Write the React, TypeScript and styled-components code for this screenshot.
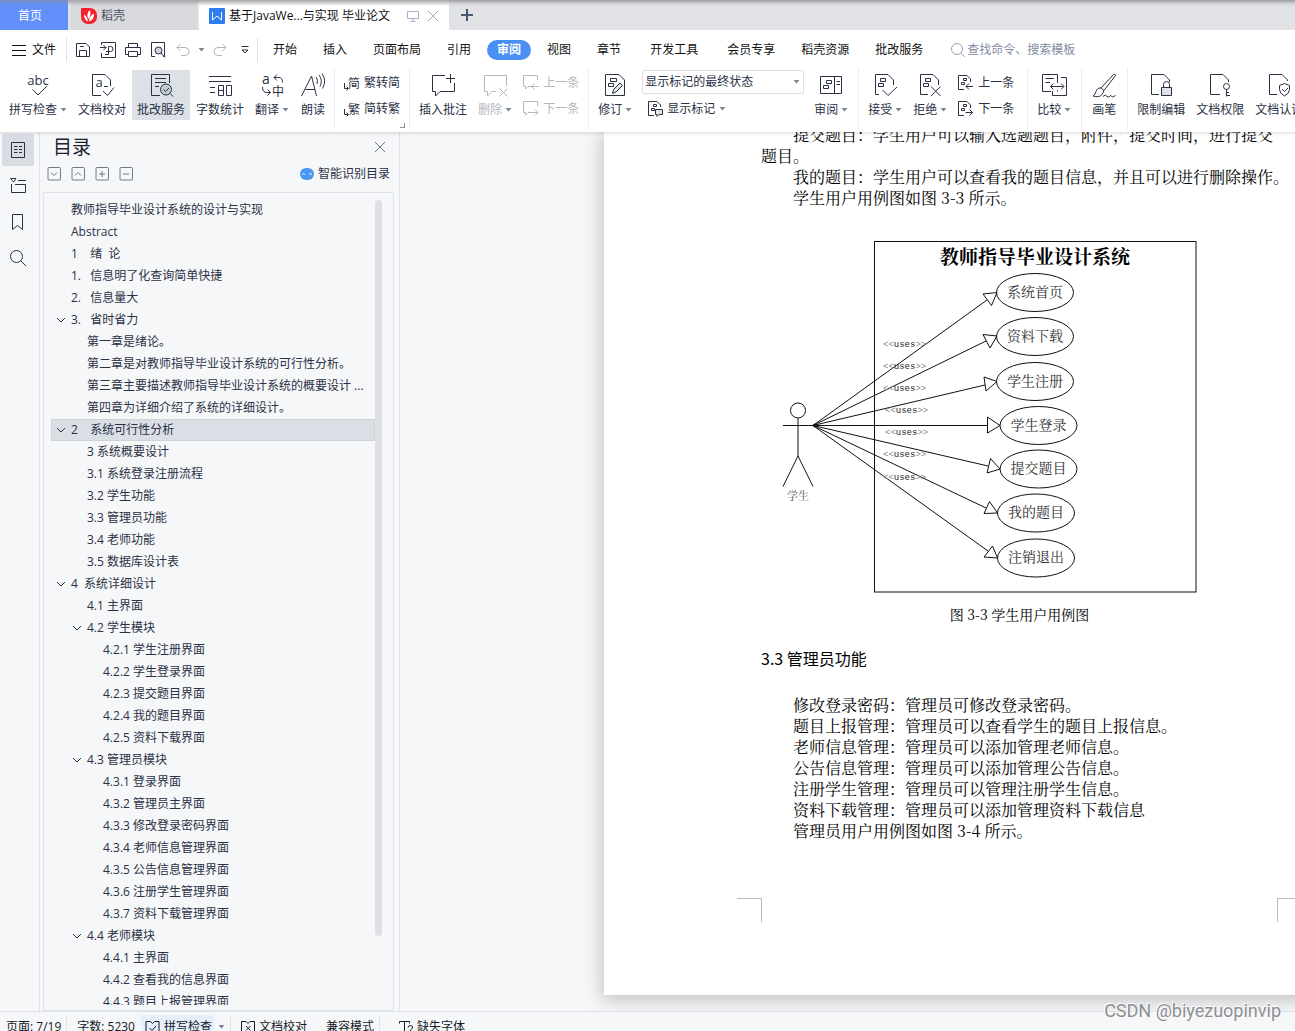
import React from "react";
import styled, { createGlobalStyle, css } from "styled-components";

const ink = "#2a3145";
const muted = "#b4b7bd";
const line = "#dfe2e6";
const panel = "#f6f7f9";
const uiFont = `"Open Sans", "Noto Sans CJK SC", sans-serif`;
const docFont = `"Noto Serif CJK SC", "Noto Sans CJK SC", serif`;

const Global = createGlobalStyle`
  * { box-sizing: border-box; }
  body { margin: 0; font: 12px/16px ${uiFont}; color: ${ink}; background: ${panel}; }
  button, input, select { font: inherit; color: inherit; background: none; border: 0; padding: 0; margin: 0; }
  button { white-space: nowrap; cursor: pointer; }
  svg { display: block; flex: none; overflow: visible; }
  ul { list-style: none; margin: 0; padding: 0; }
`;

const App_ = styled.div`
  height: 100vh;
  display: flex;
  flex-direction: column;
  overflow: hidden;
`;

/* ---------- window tabs ---------- */
const TabBar = styled.header`
  display: flex;
  flex: none;
  height: 30px;
  background:
    linear-gradient(#9c9ea0, rgba(200, 202, 205, 0.5) 4px, transparent 6px),
    #e1e2e6;
`;
const HomeTab = styled.button`
  width: 68px;
  padding: 2px 8px 0 0;
  color: #fff;
  background: linear-gradient(#7c90bb, #628ffa 5px);
`;
const Tab = styled.div<{ $active?: boolean }>`
  display: flex;
  align-items: center;
  gap: 4px;
  margin-left: ${(p) => (p.$active ? 2 : 3)}px;
  padding: 2px 8px 0 10px;
  width: ${(p) => (p.$active ? 250 : 126)}px;
  color: ${(p) => (p.$active ? "#111" : "#4b5160")};
  background: linear-gradient(
    #a4a5a7,
    ${(p) => (p.$active ? "#fff" : "#d8d9dc")} 6px
  );
`;
const TabTitle = styled.span`
  flex: 1;
  white-space: nowrap;
`;
const IconButton = styled.button<{ $size?: number }>`
  display: flex;
  align-items: center;
  justify-content: center;
  width: ${(p) => p.$size ?? 20}px;
  height: ${(p) => p.$size ?? 20}px;
`;
const NewTab = styled(IconButton)`
  width: 36px;
  height: 30px;
`;

/* ---------- menu row ---------- */
const MenuRow = styled.nav`
  display: flex;
  flex: none;
  align-items: center;
  height: 38px;
  padding-top: 1px;
  background: #fff;
`;
const FileButton = styled.button`
  display: flex;
  align-items: center;
  gap: 6px;
  padding: 0 10px 0 12px;
  color: #111;
`;
const QuickBar = styled.div`
  display: flex;
  align-items: center;
  height: 24px;
  gap: 5px;
  padding: 0 2px 0 6px;
  border: solid ${line};
  border-width: 0 1px;
`;
const MenuItems = styled.div`
  display: flex;
  align-items: center;
  padding-left: 2px;
`;
const MenuItem = styled.button<{ $wide?: boolean; $active?: boolean }>`
  color: #111;
  padding: 0 13px;
  ${(p) => p.$wide && css`padding: 0 13px 0 16px;`}
  ${(p) =>
    p.$active &&
    css`
      color: #fff;
      font-weight: 700;
      background: #4a90f4;
      height: 20px;
      border-radius: 10px;
      padding: 0 10px;
      margin: 0 3px;
    `}
`;
const Search = styled.label`
  display: flex;
  align-items: center;
  gap: 1px;
  margin-left: 14px;
  input { width: 130px; outline: 0; }
  input::placeholder { color: #828ba3; opacity: 1; }
`;

/* ---------- ribbon ---------- */
const Ribbon = styled.div`
  position: relative;
  z-index: 2;
  display: flex;
  flex: none;
  height: 64px;
  background: #fff;
  overflow: hidden;
`;
const RibbonShadow = styled.div`
  flex: none;
  height: 4px;
  margin-bottom: -4px;
  position: relative;
  z-index: 2;
  background: linear-gradient(rgba(0, 0, 0, 0.1), transparent);
`;
const Group = styled.div<{ $trail?: number; $last?: boolean }>`
  display: flex;
  flex: none;
  gap: 1px;
  height: 62px;
  padding: 2px ${(p) => p.$trail ?? 5}px 0 4px;
  border-right: ${(p) => (p.$last ? 0 : 1)}px solid #eceef0;
`;
const Big = styled.button<{ $active?: boolean }>`
  display: flex;
  flex-direction: column;
  align-items: center;
  gap: 4px;
  height: 50px;
  padding: 2px 5px 0;
  background: ${(p) => (p.$active ? "#dbe1e6" : "none")};
  &:disabled { color: ${muted}; }
`;
const Label = styled.span`
  display: flex;
  align-items: center;
  gap: 3px;
`;
const Stack = styled.div<{ $side?: number }>`
  display: flex;
  flex-direction: column;
  gap: 2px;
  padding: 0 ${(p) => p.$side ?? 0}px;
`;
const Small = styled.button`
  display: flex;
  align-items: center;
  gap: 4px;
  height: 24px;
  padding: 1px 5px 0;
  &:disabled { color: ${muted}; }
`;
const SelectBox = styled.label`
  display: grid;
  align-items: center;
  width: 162px;
  height: 24px;
  border: 1px solid #dcdfe4;
  border-radius: 2px;
  select, svg { grid-area: 1 / 1; }
  select { appearance: none; width: 100%; padding-left: 2px; outline: 0; }
  svg { justify-self: end; margin-right: 3px; pointer-events: none; }
`;
const Launcher = styled.span`
  align-self: flex-end;
  width: 5px;
  height: 5px;
  margin: 0 1px 2px -6px;
  border: solid #8a90a0;
  border-width: 0 1px 1px 0;
`;

/* ---------- work area ---------- */
const Main = styled.main`
  display: flex;
  flex: 1;
  min-height: 0;
`;
const Rail = styled.nav`
  display: flex;
  flex: none;
  flex-direction: column;
  gap: 4px;
  width: 40px;
  padding: 2px;
  border-right: 1px solid ${line};
`;
const RailButton = styled.button<{ $active?: boolean }>`
  display: flex;
  align-items: center;
  justify-content: center;
  width: 32px;
  height: 32px;
  border-radius: 2px;
  background: ${(p) => (p.$active ? "#d8dde4" : "none")};
`;
const Outline = styled.aside`
  display: flex;
  flex: none;
  flex-direction: column;
  width: 360px;
  padding: 2px 5px 0 3px;
  border-right: 1px solid ${line};
`;
const OutlineHead = styled.div`
  display: flex;
  align-items: center;
  justify-content: space-between;
  height: 26px;
  padding: 0 5px 0 10px;
  h2 { margin: 0; font-size: 19px; line-height: 26px; font-weight: 400; color: #1c2233; }
`;
const OutlineTools = styled.div`
  display: flex;
  align-items: center;
  gap: 10px;
  height: 28px;
  padding: 0 4px;
`;
const Smart = styled.button`
  display: flex;
  align-items: center;
  gap: 4px;
  margin-left: auto;
`;
const TreeBox = styled.div`
  display: flex;
  flex: 1;
  min-height: 0;
  margin-top: 4px;
  padding: 6px 11px 5px 7px;
  border: 1px solid ${line};
  border-radius: 2px;
`;
const Tree = styled.ul`
  flex: 1;
  overflow: hidden;
`;
const Row = styled.button<{ $level: number; $active?: boolean }>`
  display: flex;
  align-items: center;
  gap: 5px;
  width: 100%;
  height: 22px;
  padding-left: ${(p) => 4 + p.$level * 16}px;
  white-space: pre;
  border: 1px solid ${(p) => (p.$active ? "#cdd3da" : "transparent")};
  background: ${(p) => (p.$active ? "#dadfe5" : "none")};
`;
const Chevron = styled.span`
  width: 10px;
`;
const Scroll = styled.div`
  width: 7px;
  height: 736px;
  max-height: 92%;
  margin-top: 1px;
  border-radius: 4px;
  background: #dfe0e3;
`;

const Canvas = styled.section`
  display: flex;
  flex: 1;
  min-width: 0;
  padding: 0 0 16px 204px;
  overflow: hidden;
  background: ${panel};
`;
const Page = styled.article`
  flex: none;
  width: 831px;
  padding: 0 157px;
  background: #fff;
  box-shadow: 0 3px 18px 2px rgba(0, 0, 0, 0.22);
  color: #000;
  font: 16px/21px ${docFont};
`;
const Scrolled = styled.div`
  margin-top: -8px;
  p { margin: 0; text-indent: 32px; }
  h3 { margin: 23px 0 25px; font-size: 16px; line-height: 21px; font-weight: 400; font-family: "Noto Sans CJK SC", sans-serif; }
`;
const OneLine = styled.p`
  white-space: nowrap;
`;
const Figure = styled.figure`
  margin: 23px 0 0;
  svg { width: 100%; }
  figcaption { margin-top: 3px; font-size: 14px; text-align: center; }
`;
const CropMarks = styled.div`
  display: flex;
  justify-content: space-between;
  margin: 57px -24px 0;
`;
const Mark = styled.span<{ $right?: boolean }>`
  width: 25px;
  height: 24px;
  border-top: 1px solid #bbb;
  ${(p) => (p.$right ? "border-left" : "border-right")}: 1px solid #bbb;
`;

/* ---------- status bar ---------- */
const StatusBar = styled.footer`
  display: flex;
  flex: none;
  height: 20px;
  overflow: hidden;
  padding: 3px 0 0 6px;
  color: #151a28;
  border-top: 1px solid ${line};
  background: ${panel};
`;
const StatusItem = styled.button<{ $on?: boolean; $gap?: number }>`
  display: flex;
  align-items: center;
  gap: 4px;
  height: 24px;
  margin-right: ${(p) => p.$gap ?? 6}px;
  ${(p) => p.$on && css`background: #e5effb; padding: 0 2px 0 4px;`}
`;
const StatusRule = styled.span<{ $gap?: number }>`
  width: 1px;
  height: 20px;
  margin: 1px ${(p) => p.$gap ?? 10}px 0 0;
  background: ${line};
`;
const Watermark = styled.div`
  position: absolute;
  right: 14px;
  bottom: 8px;
  z-index: 3;
  font: 18px/24px Roboto, sans-serif;
  color: #8d8f92;
  text-shadow: -1px -1px 0 #fff;
`;

/* ---------- icons ---------- */
type IconProps = { w?: number; h?: number; children: React.ReactNode };
const Ico = ({ w = 26, h = w, children }: IconProps) => (
  <svg width={w} height={h} viewBox={`0 0 ${w} ${h}`} fill="none" stroke="currentColor" aria-hidden="true">
    {children}
  </svg>
);
const Caret = () => (
  <svg width="7" height="4" viewBox="0 0 7 4" aria-hidden="true">
    <path d="M0.5 0h6L3.5 3.5z" fill="#7c8498" />
  </svg>
);
const glyph = { fill: "currentColor", stroke: "none" };

const icons = {
  spell: (
    <Ico>
      <text x="13" y="13" fontSize="13" textAnchor="middle" {...glyph}>abc</text>
      <path d="M7.500 17.500l5.500 5.500 9-9" />
    </Ico>
  ),
  proof: (
    <Ico>
      <path d="M12 23.500H3.500V2.500H16L21.500 8V14M14 19l4.500 4.500L25 15.500" />
      <text x="6.500" y="15" fontSize="13" {...glyph}>a</text>
      <path d="M15 14.500h4" />
    </Ico>
  ),
  review: (
    <Ico>
      <path d="M12 23.500H3.500V2.500H21.500V11M7 6.500H18M7 10.500H18M7 14.500H11" />
      <circle cx="18" cy="17.500" r="5.500" fill="#c3c9d1" />
      <path d="M15.500 17.500l2 2 3.500-3.500M22 21.500l3 3" />
    </Ico>
  ),
  count: (
    <Ico>
      <path d="M2 4.500H24M2 9.500H24M3 15.500H8M3 20.500H8M11.500 13.500H16.500V23.500H11.500zM11.500 18.500H16.500M19.500 13.500H24.500V23.500H19.500z" />
    </Ico>
  ),
  translate: (
    <Ico>
      <text x="3" y="12" fontSize="14" {...glyph}>a</text>
      <text x="13" y="24" fontSize="12" {...glyph}>中</text>
      <path d="M15 5.500H20q3.500 0 3.500 5M18 2.500l-3 3 3 3M3.500 15q0 5.500 4.500 5.500h3M8.500 17.500l3 3-3 3" />
    </Ico>
  ),
  read: (
    <Ico>
      <path d="M1.500 24L11.500 4L16.500 24M5.500 17.500H15" />
      <path d="M16 5q2.500 3 1 7M19 3q4 5 1 11.500M22 1.500q5 7 .5 15" />
    </Ico>
  ),
  comment: (
    <Ico>
      <path d="M15 3.500H2.500V19.500H5.500V24L10 19.500H24.500V11M20.500 2V11M16 6.500H25" />
    </Ico>
  ),
  uncomment: (
    <Ico>
      <path d="M14 19.500H10L5.500 24V19.500H2.500V3.500H24.500V14M17.500 16.500l8 8M25.500 16.500l-8 8" />
    </Ico>
  ),
  revise: (
    <Ico>
      <path d="M12 23.500H3.500V2.500H17L22.500 8V23.500H12M8.500 6.500H14.500V9.500H8.500zM6.500 11.500H11.500V14.500H6.500z" />
      <path d="M10.500 21.500l1-4 6.500-6.500 2.500 2.500-6.500 6.500z" fill="#dfe2e6" />
    </Ico>
  ),
  pane: (
    <Ico>
      <path d="M2.500 4.500H23.500V21.500H2.500zM16.500 4.500V21.500M8.500 8.500H13.500V11.500H8.500zM5.500 13.500H10.500V16.500H5.500zM18.500 9.500H22M18.500 12.500H22" />
    </Ico>
  ),
  accept: (
    <Ico>
      <path d="M7 22.500H3.500V2.500H16L21.500 8V13M8.500 6.500H13.500V9.500H8.500zM6.500 11.500H11.500V14.500H6.500zM10.500 18l5.500 5.500L25 15" />
    </Ico>
  ),
  reject: (
    <Ico>
      <path d="M11 22.500H3.500V2.500H16L21.500 8V13M8.500 6.500H13.500V9.500H8.500zM6.500 11.500H11.500V14.500H6.500zM14 14.500l9.500 9.500M23.500 14.500L14 24" />
    </Ico>
  ),
  compare: (
    <Ico>
      <path d="M16.500 11V2.500H1.500V19.500H10M4.500 6.500H13M4.500 10.500H9M20 5.500H25.500V23.500H11.500V19M16.500 19.500V18M10 14.500H22.500M12.500 11.500l-3 3 3 3M20 11.500l3 3-3 3" />
    </Ico>
  ),
  brush: (
    <Ico>
      <path d="M22.500 2.500q1.500-1 2 1L13 18.500l-3-2.500zM10 16q-4-.5-5 3.500-.5 3-3 4.500 6 2 9-1.500 1.500-2 2-4M12 24.500q2.500-3 4 0 2 1.500 3.500-1 2 3 5 0" />
    </Ico>
  ),
  lockDoc: (
    <Ico>
      <path d="M11 22.500H3.500V2.500H16L21.500 8V10M15.500 15V12.500a3 3 0 0 1 6 0V15" />
      <path d="M13.500 15.500H23.500V23.500H13.500z" fill="#dfe2e6" />
    </Ico>
  ),
  keyDoc: (
    <Ico>
      <path d="M13 22.500H3.500V2.500H16L21.500 8V10" />
      <circle cx="19.500" cy="14.500" r="3" />
      <path d="M19.500 17.500V24.500M19.500 20.500H22M19.500 23.500H23" />
    </Ico>
  ),
  shieldDoc: (
    <Ico>
      <path d="M11 22.500H3.500V2.500H16L21.500 8V9M18.500 11.500l5 2v4q0 4-5 6.500-5-2.500-5-6.500v-4zM16 17l2.500 2.500 3.500-3.500" />
    </Ico>
  ),
};

const Convert = ({ char }: { char: string }) => (
  <Ico w={16}>
    <text x="4" y="13" fontSize="12" {...glyph}>{char}</text>
    <path d="M.5 8V13.500H4M2.500 11.500l2 2-2 2" />
  </Ico>
);
const CommentNav = ({ next }: { next?: boolean }) => (
  <Ico w={16}>
    <path d="M8 11.500H5L2.500 14V11.500H.5V.5H14.500V5" />
    <path d={next ? "M8 11.500H15M12 8.500l3 3-3 3" : "M8.500 11.500H16M11.500 8.500l-3 3 3 3"} />
  </Ico>
);
const ChangeNav = ({ next }: { next?: boolean }) => (
  <Ico w={16}>
    <path d="M6 14.500H.5V.5H9L12.500 4V7M5.500 3.500H8.500V5.500H5.500zM3.500 7.500H6.500V9.500H3.500z" />
    <path d={next ? "M7.500 11.500H14.500M11.500 8.500l3 3-3 3" : "M8 11.500H15M11 8.500l-3 3 3 3"} />
  </Ico>
);

type BigProps = { icon: React.ReactNode; text: string; menu?: boolean; active?: boolean; disabled?: boolean };
const BigButton = ({ icon, text, menu, active, disabled }: BigProps) => (
  <Big $active={active} disabled={disabled}>
    {icon}
    <Label>
      {text}
      {menu && <Caret />}
    </Label>
  </Big>
);

/* ---------- data ---------- */
type Node = { level: number; text: string; open?: boolean; active?: boolean };
const outline: Node[] = [
  { level: 0, text: "教师指导毕业设计系统的设计与实现" },
  { level: 0, text: "Abstract" },
  { level: 0, text: "1    绪  论" },
  { level: 0, text: "1.   信息明了化查询简单快捷" },
  { level: 0, text: "2.   信息量大" },
  { level: 0, text: "3.   省时省力", open: true },
  { level: 1, text: "第一章是绪论。" },
  { level: 1, text: "第二章是对教师指导毕业设计系统的可行性分析。" },
  { level: 1, text: "第三章主要描述教师指导毕业设计系统的概要设计 ..." },
  { level: 1, text: "第四章为详细介绍了系统的详细设计。" },
  { level: 0, text: "2    系统可行性分析", open: true, active: true },
  { level: 1, text: "3 系统概要设计" },
  { level: 1, text: "3.1 系统登录注册流程" },
  { level: 1, text: "3.2 学生功能" },
  { level: 1, text: "3.3 管理员功能" },
  { level: 1, text: "3.4 老师功能" },
  { level: 1, text: "3.5 数据库设计表" },
  { level: 0, text: "4  系统详细设计", open: true },
  { level: 1, text: "4.1 主界面" },
  { level: 1, text: "4.2 学生模块", open: true },
  { level: 2, text: "4.2.1 学生注册界面" },
  { level: 2, text: "4.2.2 学生登录界面" },
  { level: 2, text: "4.2.3 提交题目界面" },
  { level: 2, text: "4.2.4 我的题目界面" },
  { level: 2, text: "4.2.5 资料下载界面" },
  { level: 1, text: "4.3 管理员模块", open: true },
  { level: 2, text: "4.3.1 登录界面" },
  { level: 2, text: "4.3.2 管理员主界面" },
  { level: 2, text: "4.3.3 修改登录密码界面" },
  { level: 2, text: "4.3.4 老师信息管理界面" },
  { level: 2, text: "4.3.5 公告信息管理界面" },
  { level: 2, text: "4.3.6 注册学生管理界面" },
  { level: 2, text: "4.3.7 资料下载管理界面" },
  { level: 1, text: "4.4 老师模块", open: true },
  { level: 2, text: "4.4.1 主界面" },
  { level: 2, text: "4.4.2 查看我的信息界面" },
  { level: 2, text: "4.4.3 题目上报管理界面" },
];

const cases = [
  { name: "系统首页", cx: 1035, cy: 292.5, head: "983,294 997,292.5 991.5,305.5", end: [987, 300], uses: [883, 347] },
  { name: "资料下载", cx: 1035, cy: 336.5, head: "983,334.500 997,336 990,348", end: [986, 341], uses: [883, 369] },
  { name: "学生注册", cx: 1035, cy: 381.5, head: "984,377 997,381.500 986,391", end: [985, 385], uses: [883, 391] },
  { name: "学生登录", cx: 1038.5, cy: 425.5, head: "987.500,417 1000,425.500 987.500,433", end: [987, 425.5], uses: [885, 413] },
  { name: "提交题目", cx: 1038.5, cy: 469, head: "990.500,458.500 1000,469 987,473", end: [988, 466], uses: [885, 435] },
  { name: "我的题目", cx: 1036, cy: 513, head: "989.500,501.500 997.500,513 984,513.500", end: [986, 508], uses: [883, 457] },
  { name: "注销退出", cx: 1036, cy: 558, head: "992.500,546 997.500,558 984,557", end: [988, 551], uses: [883, 480] },
];

const UseCaseDiagram = () => (
  <svg height="370" viewBox="761 231 517 370" fill="none" stroke="#111" fontFamily={docFont}>
    <rect x="874.5" y="241.500" width="321.5" height="350.500" />
    <text x="1035" y="264" fontSize="19" fontWeight="700" textAnchor="middle" fill="#000" stroke="none">
      教师指导毕业设计系统
    </text>
    <circle cx="798" cy="410.500" r="7.500" />
    <path d="M798 418V456M783 425.500H813M798 456L783 486.500M798 456L813 486.500" />
    <text x="798" y="500" fontSize="11" textAnchor="middle" fill="#555" stroke="none">学生</text>
    {cases.map((c) => (
      <g key={c.name}>
        <path d={`M813 425.500L${c.end[0]} ${c.end[1]}`} />
        <polygon points={c.head} />
        <ellipse cx={c.cx} cy={c.cy} rx="38.500" ry="19" />
        <text x={c.cx} y={c.cy + 4} fontSize="14" textAnchor="middle" fill="#333" stroke="none">
          {c.name}
        </text>
        <text x={c.uses[0]} y={c.uses[1]} fontSize="9" fontFamily="Liberation Mono, monospace" fill="#888" stroke="none">
          &lt;&lt;<tspan fill="#222">uses</tspan>&gt;&gt;
        </text>
      </g>
    ))}
    <circle cx="815" cy="425.500" r="1.500" fill="#111" />
  </svg>
);

const toolPaths = [
  ["全部收起", "M4 5.500l3 3 3-3"],
  ["全部展开", "M4 8.500l3-3 3 3"],
  ["增加", "M4 7H10M7 4V10"],
  ["减少", "M4 7H10"],
];

export default function App() {
  return (
    <App_>
      <Global />
      <TabBar>
        <HomeTab>首页</HomeTab>
        <Tab>
          <svg width="16" height="16" viewBox="0 0 16 16" aria-hidden="true">
            <path d="M1 0h8a7 7 0 0 1 7 7v2a7 7 0 0 1-7 7H7a7 7 0 0 1-7-7V1a1 1 0 0 1 1-1z" fill="#f5222d" />
            <path d="M8.500 2q2.500 4-1 9-2.500-4.500 1-9zM13 5.500q.5 6-5 8 0-5.500 5-8zM3 6.500q3.500 2 4 7Q3 12 3 6.500z" fill="#fff" />
          </svg>
          <TabTitle>稻壳</TabTitle>
        </Tab>
        <Tab $active>
          <svg width="16" height="16" viewBox="0 0 16 16" aria-hidden="true">
            <rect width="16" height="16" rx="1" fill="#2e7df0" />
            <path d="M3.500 4v8l4.500-4 4.500 4V4" fill="none" stroke="#fff" />
          </svg>
          <TabTitle>基于JavaWe...与实现 毕业论文</TabTitle>
          <IconButton $size={16} aria-label="窗口">
            <svg width="12" height="12" viewBox="0 0 12 12" fill="none" stroke="#a9b0c6">
              <path d="M.5 1.500H11.500V8.500H.5zM6 8.500V11M3.500 11.500H8.500" />
            </svg>
          </IconButton>
          <IconButton $size={16} aria-label="关闭标签">
            <svg width="12" height="12" viewBox="0 0 12 12" stroke="#a0a7b8"><path d="M1 1L11 11M11 1L1 11" /></svg>
          </IconButton>
        </Tab>
        <NewTab aria-label="新建">
          <svg width="12" height="12" viewBox="0 0 12 12" stroke="#4a5878" strokeWidth="2"><path d="M6 0V12M0 6H12" /></svg>
        </NewTab>
      </TabBar>

      <MenuRow>
        <FileButton>
          <Ico w={14}><path d="M0 2.500H14M0 7.500H14M0 12.500H14" /></Ico>
          文件
        </FileButton>
        <QuickBar>
          <IconButton aria-label="保存">
            <Ico w={16}><path d="M1.500 1.500H11L14.500 5V14.500H1.500zM4.500 14.500V8.500H11.500V14.500M5 4.500H9" /></Ico>
          </IconButton>
          <IconButton aria-label="输出为PDF">
            <Ico w={16}><path d="M1.500 3V.5H15.500V15.500H1.500V11M0 5.500H6M3.500 3l2.500 2.500L3.500 8M5 12.500H8.500V4.500H10.500a2.500 2.500 0 0 1 0 5H6" /></Ico>
          </IconButton>
          <IconButton aria-label="打印">
            <Ico w={16}><path d="M3.500 5V1.500H12.500V5M3.500 12.500H.5V5.500H15.500V12.500H12.500M3.500 9.500H12.500V14.500H3.500z" /></Ico>
          </IconButton>
          <IconButton aria-label="打印预览">
            <Ico w={16}>
              <path d="M5 14.500H1.500V.5H14.500V14.500H13" />
              <circle cx="8.500" cy="8.500" r="3.500" fill="#cfd4dc" />
              <path d="M11 11l4 4.500" />
            </Ico>
          </IconButton>
          <IconButton aria-label="撤销">
            <svg width="16" height="16" viewBox="0 0 16 16" fill="none" stroke={muted}><path d="M2 5.500H10a4 4 0 0 1 0 8H6M5.500 2L2 5.500 5.500 9" /></svg>
          </IconButton>
          <Caret />
          <IconButton aria-label="恢复">
            <svg width="16" height="16" viewBox="0 0 16 16" fill="none" stroke={muted}><path d="M14 5.500H6a4 4 0 0 0 0 8H10M10.500 2L14 5.500 10.500 9" /></svg>
          </IconButton>
          <IconButton aria-label="自定义">
            <Ico w={10}><path d="M1.500 1.500H8.500M2 5l3 3 3-3z" /></Ico>
          </IconButton>
        </QuickBar>
        <MenuItems>
          <MenuItem>开始</MenuItem>
          <MenuItem>插入</MenuItem>
          <MenuItem>页面布局</MenuItem>
          <MenuItem>引用</MenuItem>
          <MenuItem $active>审阅</MenuItem>
          <MenuItem>视图</MenuItem>
          <MenuItem>章节</MenuItem>
          <MenuItem $wide>开发工具</MenuItem>
          <MenuItem $wide>会员专享</MenuItem>
          <MenuItem>稻壳资源</MenuItem>
          <MenuItem>批改服务</MenuItem>
        </MenuItems>
        <Search>
          <svg width="16" height="16" viewBox="0 0 16 16" fill="none" stroke="#98a1b5"><circle cx="7" cy="7" r="5.500" /><path d="M11 11l4 4" /></svg>
          <input aria-label="查找命令" placeholder="查找命令、搜索模板" />
        </Search>
      </MenuRow>

      <Ribbon>
        <Group $trail={3}>
          <BigButton icon={icons.spell} text="拼写检查" menu />
          <BigButton icon={icons.proof} text="文档校对" />
          <BigButton icon={icons.review} text="批改服务" active />
          <BigButton icon={icons.count} text="字数统计" />
          <BigButton icon={icons.translate} text="翻译" menu />
          <BigButton icon={icons.read} text="朗读" />
        </Group>
        <Group $trail={3}>
          <Stack>
            <Small><Convert char="简" />繁转简</Small>
            <Small><Convert char="繁" />简转繁</Small>
          </Stack>
          <Launcher />
        </Group>
        <Group $trail={4}>
          <BigButton icon={icons.comment} text="插入批注" />
          <BigButton icon={icons.uncomment} text="删除" menu disabled />
          <Stack>
            <Small disabled><CommentNav />上一条</Small>
            <Small disabled><CommentNav next />下一条</Small>
          </Stack>
        </Group>
        <Group>
          <BigButton icon={icons.revise} text="修订" menu />
          <Stack $side={4}>
            <SelectBox>
              <select aria-label="显示状态">
                <option>显示标记的最终状态</option>
              </select>
              <Caret />
            </SelectBox>
            <Small>
              <Ico w={16}>
                <path d="M7 14.500H1.500V.5H10L13.500 4V6M6.500 3.500H9.500V5.500H6.500zM4.500 7.500H7.500V9.500H4.500z" />
                <path d="M8.500 8.500H15.500V13.500H12L10 15.500V13.500H8.500z" fill="#dfe2e6" />
              </Ico>
              显示标记
              <Caret />
            </Small>
          </Stack>
          <BigButton icon={icons.pane} text="审阅" menu />
        </Group>
        <Group $trail={8}>
          <BigButton icon={icons.accept} text="接受" menu />
          <BigButton icon={icons.reject} text="拒绝" menu />
          <Stack>
            <Small><ChangeNav />上一条</Small>
            <Small><ChangeNav next />下一条</Small>
          </Stack>
        </Group>
        <Group><BigButton icon={icons.compare} text="比较" menu /></Group>
        <Group><BigButton icon={icons.brush} text="画笔" /></Group>
        <Group $last>
          <BigButton icon={icons.lockDoc} text="限制编辑" />
          <BigButton icon={icons.keyDoc} text="文档权限" />
          <BigButton icon={icons.shieldDoc} text="文档认证" />
        </Group>
      </Ribbon>
      <RibbonShadow />

      <Main>
        <Rail>
          <RailButton $active aria-label="目录">
            <Ico w={16}><path d="M1.500 .5H14.500V15.500H1.500zM4 4.500H7.500M9 4.500H12M4 7.500H7.500M9 7.500H12M4 10.500H7.500M9 10.500H12" /></Ico>
          </RailButton>
          <RailButton aria-label="章节">
            <Ico w={16}><path d="M.5 .5H6L3.500 4zM8 2.500H16M1.500 6V14.500H15.500V6.500H5" /></Ico>
          </RailButton>
          <RailButton aria-label="书签">
            <Ico w={16}><path d="M2.500 .5H12.500V15.500L7.500 11.500 2.500 15.500z" /></Ico>
          </RailButton>
          <RailButton aria-label="查找">
            <Ico w={18}><circle cx="7.500" cy="7.500" r="6" /><path d="M12 12l5 5" /></Ico>
          </RailButton>
        </Rail>

        <Outline>
          <OutlineHead>
            <h2>目录</h2>
            <IconButton $size={18} aria-label="关闭目录">
              <svg width="10" height="10" viewBox="0 0 10 10" stroke="#6c7488"><path d="M0 0L10 10M10 0L0 10" /></svg>
            </IconButton>
          </OutlineHead>
          <OutlineTools>
            {toolPaths.map(([name, d]) => (
              <IconButton key={name} $size={14} aria-label={name}>
                <svg width="14" height="14" viewBox="0 0 14 14" fill="none" stroke="#72798a">
                  <rect x="1" y=".5" width="12.500" height="12.500" rx="1" />
                  <path d={d} />
                </svg>
              </IconButton>
            ))}
            <Smart>
              <svg width="14" height="12" viewBox="0 0 14 12" aria-hidden="true">
                <rect width="14" height="12" rx="6" fill="#4a96f0" />
                <path d="M2 6.500q1.500-2 3 0M9 6.500q1.500-2 3 0" stroke="#fff" fill="none" />
              </svg>
              智能识别目录
            </Smart>
          </OutlineTools>
          <TreeBox>
            <Tree>
              {outline.map((n) => (
                <li key={n.text}>
                  <Row $level={n.level} $active={n.active}>
                    <Chevron>
                      {n.open && <Ico w={10}><path d="M1 3l4 4 4-4" /></Ico>}
                    </Chevron>
                    {n.text}
                  </Row>
                </li>
              ))}
            </Tree>
            <Scroll />
          </TreeBox>
        </Outline>

        <Canvas>
          <Page>
            <Scrolled>
              <p>提交题目：学生用户可以输入选题题目，附件，提交时间，进行提交题目。</p>
              <OneLine>我的题目：学生用户可以查看我的题目信息，并且可以进行删除操作。</OneLine>
              <p>学生用户用例图如图 3-3 所示。</p>
              <Figure>
                <UseCaseDiagram />
                <figcaption>图 3-3 学生用户用例图</figcaption>
              </Figure>
              <h3>3.3 管理员功能</h3>
              <p>修改登录密码：管理员可修改登录密码。</p>
              <p>题目上报管理：管理员可以查看学生的题目上报信息。</p>
              <p>老师信息管理：管理员可以添加管理老师信息。</p>
              <p>公告信息管理：管理员可以添加管理公告信息。</p>
              <p>注册学生管理：管理员可以管理注册学生信息。</p>
              <p>资料下载管理：管理员可以添加管理资料下载信息</p>
              <p>管理员用户用例图如图 3-4 所示。</p>
            </Scrolled>
            <CropMarks>
              <Mark />
              <Mark $right />
            </CropMarks>
          </Page>
        </Canvas>
      </Main>

      <StatusBar>
        <StatusItem $gap={5}>页面: 7/19</StatusItem>
        <StatusRule />
        <StatusItem>字数: 5230</StatusItem>
        <StatusItem $on $gap={4}>
          <Ico w={15}><path d="M5.500 1.500H1V13.500H14V1.500H9.500M5.500 1.500l2 2 2-2M4.500 8l2.500 2.500L11 6" /></Ico>
          拼写检查
        </StatusItem>
        <StatusItem $gap={5}><Caret /></StatusItem>
        <StatusRule />
        <StatusItem $gap={19}>
          <Ico w={14}><path d="M5 1.500H.5V13.500H13.500V1.500H9M5 1.500l2 2 2-2M5 6l4.500 4.500M9.500 6L5 10.500" /></Ico>
          文档校对
        </StatusItem>
        <StatusItem $gap={5}>兼容模式</StatusItem>
        <StatusRule $gap={19} />
        <StatusItem>
          <Ico w={14}><path d="M.5 3.500V1.500H10.500V3.500M5.500 1.500V13.500M3.500 13.500H7.500M9 7.500q0-2 2.500-2 2.500 0 2 2.500-2 1.500-2 3M11.500 12.500V14" /></Ico>
          缺失字体
        </StatusItem>
      </StatusBar>
      <Watermark>CSDN @biyezuopinvip</Watermark>
    </App_>
  );
}
